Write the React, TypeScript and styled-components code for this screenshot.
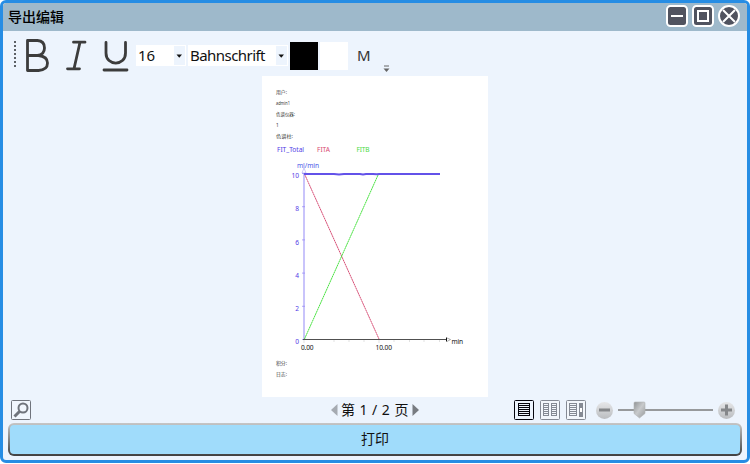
import React from "react";
import styled, { createGlobalStyle } from "styled-components";

const uiFont = `"Noto Sans", "Noto Sans CJK SC", sans-serif`;

const GlobalStyle = createGlobalStyle`
  * { box-sizing: border-box; }
  body { margin: 0; background: #fff; font-family: ${uiFont}; color: #111; overflow: hidden; }
  svg { display: block; flex: none; }
`;

const Window = styled.div`
  width: 750px;
  height: 463px;
  display: flex;
  flex-direction: column;
  border: 3px solid #268de4;
  border-radius: 6px;
  background: #edf4fd;
  overflow: hidden;
`;

const TitleBar = styled.header`
  height: 28px;
  flex: none;
  display: flex;
  align-items: center;
  justify-content: space-between;
  padding: 0 7px 0 5px;
  background: #9eb9cb;
`;

const Title = styled.span`
  font-size: 14px;
  line-height: 28px;
  font-weight: 500;
  color: #000;
`;

const WindowButtons = styled.div`
  display: flex;
  gap: 4px;
  margin-top: -2px;
`;

const Toolbar = styled.div`
  height: 45px;
  flex: none;
  display: flex;
  align-items: flex-start;
  padding: 5px 0 0 10px;
`;

const FormatIcons = styled.div`
  display: flex;
  margin-right: 3px;
`;

const Combo = styled.div<{ $width: number }>`
  width: ${(p) => p.$width}px;
  height: 21px;
  margin: 9px 2px 0 0;
  display: flex;
  justify-content: space-between;
  align-items: center;
  background: #fff;
  padding: 1px 1px 1px 2px;
  font-size: 15px;
  line-height: 19px;
  white-space: nowrap;
`;

const ComboText = styled.span<{ $width: number; $tracking?: number }>`
  width: ${(p) => p.$width}px;
  letter-spacing: ${(p) => p.$tracking ?? 0}px;
`;

const ComboArrow = styled.span`
  width: 11px;
  height: 19px;
  display: flex;
  align-items: center;
  justify-content: center;
  background: #edf4fd;
`;

const Swatch = styled.div<{ $color: string; $gap?: number }>`
  width: 28px;
  height: 28px;
  margin-top: 6px;
  margin-right: ${(p) => p.$gap ?? 0}px;
  background: ${(p) => p.$color};
`;

const MarkLabel = styled.span`
  width: 26px;
  margin-top: 9px;
  font-size: 15px;
  line-height: 21px;
  color: #333;
`;

const Overflow = styled.div`
  margin-top: 29px;
`;

const Viewer = styled.main`
  height: 321px;
  flex: none;
  display: flex;
  justify-content: center;
`;

const Paper = styled.section`
  width: 226px;
  height: 321px;
  background: #fff;
`;

const StatusBar = styled.div`
  height: 26px;
  flex: none;
  display: grid;
  grid-template-columns: 328px 1fr auto;
  align-items: center;
  padding: 0 11px 0 0;
`;

const SearchSlot = styled.div`
  padding-left: 8px;
`;

const Pager = styled.div`
  display: flex;
  align-items: center;
`;

const PageText = styled.span`
  width: 68px;
  margin: 0 3px;
  font-size: 14px;
  line-height: 26px;
  letter-spacing: 0.45px;
  white-space: nowrap;
`;

const ViewControls = styled.div`
  display: flex;
  align-items: center;
`;

const LayoutButtons = styled.div`
  display: flex;
  gap: 6px;
  margin-right: 10px;
`;

const PrintButton = styled.button`
  height: 33px;
  margin: 0 5px;
  padding: 0 0 2px;
  border: 2px solid transparent;
  border-radius: 6px;
  background:
    linear-gradient(#a0dcfb, #a0dcfb) padding-box,
    linear-gradient(#c6c6c6, #404040) border-box;
  font: 14px/27px ${uiFont};
  color: #111;
`;

type Kind = "min" | "max" | "close";

function WindowButton({ kind }: { kind: Kind }) {
  return (
    <svg width="22" height="22" viewBox="0 0 22 22" fill="none" stroke="#fff" strokeWidth="2">
      {kind === "close" ? (
        <circle cx="11" cy="11" r="10" fill="#50535f" />
      ) : (
        <rect x="1" y="1" width="20" height="20" rx="3.5" fill="#50535f" />
      )}
      {kind === "min" && <path d="M5 11H17" />}
      {kind === "max" && <rect x="6" y="6" width="10" height="10" />}
      {kind === "close" && <path d="M5 5L17 17M17 5L5 17" />}
    </svg>
  );
}

function FormatGlyphs() {
  return (
    <svg width="120" height="38" viewBox="13 36 120 38" fill="none" stroke="#3c3c3c" strokeWidth="2.8">
      <path d="M15 41V68" stroke="#5c6065" strokeWidth="2" strokeDasharray="2 2" />
      <path d="M27.5 40.5H37.5Q44.5 41 44.5 48Q44.5 54.5 37.5 55.5H27.5ZM27.5 55.5H38.5Q47.5 56.5 47.5 63Q47.5 70 38.5 70.5H27.5Z" strokeLinejoin="round" />
      <path d="M73.5 42.2H85M67.5 68.8H79.5M80 42.2L74 68.8" strokeLinecap="round" />
      <path d="M106 42.5V53C106 66.5 125.5 66.5 125.5 53V42.5M104 70H127" strokeLinecap="round" />
    </svg>
  );
}

function Triangle({ dir, color }: { dir: "left" | "right" | "down"; color: string }) {
  if (dir === "down") {
    return <svg width="7" height="4"><path d="M.5 .5H6L3.25 3.7Z" fill={color} /></svg>;
  }
  return (
    <svg width="7" height="12">
      <path d={dir === "left" ? "M6.5 0V12L0 6Z" : "M.5 0V12L7 6Z"} fill={color} />
    </svg>
  );
}

function SearchIcon() {
  return (
    <svg width="20" height="20" viewBox="0 0 20 20" fill="none" stroke="#70747c">
      <rect x=".5" y=".5" width="19" height="19" rx="1" fill="#f1f6fd" />
      <circle cx="12" cy="8" r="4.5" strokeWidth="2" />
      <path d="M8.5 11.5L3.5 16.5" strokeWidth="3" />
    </svg>
  );
}

function LayoutIcon({ kind }: { kind: "single" | "double" | "side" }) {
  const active = kind === "single";
  const color = active ? "#05050d" : "#858a94";
  const rows = [4, 6, 8, 10, 12, 14, 16];
  return (
    <svg width="20" height="20" viewBox="0 0 20 20" fill="none" stroke={color}>
      <rect x=".5" y=".5" width="19" height="19" rx="1" fill={active ? "#edf4fd" : "#f3f7fc"} />
      {rows.map((y) => (
        <React.Fragment key={y}>
          {kind === "single" && <path d={`M4 ${y - 0.5}H16`} strokeWidth="1.2" />}
          {kind === "double" && <path d={`M3 ${y - 0.5}H9M11 ${y - 0.5}H17`} strokeWidth="1.2" />}
          {kind === "side" && <path d={`M3 ${y - 0.5}H11`} strokeWidth="1.2" />}
        </React.Fragment>
      ))}
      {kind === "single" && <path d="M4.5 3V16M15.5 3V16" />}
      {kind === "double" && <path d="M3.5 3V16M8.5 3V16M11.5 3V16M16.5 3V16" />}
      {kind === "side" && (
        <>
          <path d="M3.5 3V16M10.5 3V16" />
          <rect x="13" y="3" width="4" height="14" fill={color} stroke="none" />
          <rect x="14" y="8" width="2" height="4" fill="#fff" stroke="none" />
        </>
      )}
    </svg>
  );
}

function ZoomSlider() {
  return (
    <svg width="140" height="20" viewBox="596 400 140 20">
      <defs>
        <linearGradient id="knob" x2="0" y2="1">
          <stop offset="0" stopColor="#e6e7e9" />
          <stop offset="1" stopColor="#babcbf" />
        </linearGradient>
        <linearGradient id="thumb" x2="1" y2="1">
          <stop offset="0" stopColor="#909395" />
          <stop offset=".48" stopColor="#c8cacc" />
          <stop offset="1" stopColor="#96999b" />
        </linearGradient>
      </defs>
      <circle cx="604.5" cy="410.5" r="8.5" fill="url(#knob)" />
      <path d="M599 410H610" stroke="#85878a" strokeWidth="3" />
      <path d="M618 410H713" stroke="#97999b" strokeWidth="2" />
      <path d="M634 403Q634 402 635 402H644Q645 402 645 403V413.5L639.5 418L634 413.5Z" fill="url(#thumb)" stroke="#b4b6b7" strokeWidth=".6" />
      <circle cx="726.5" cy="410.5" r="8.5" fill="url(#knob)" />
      <path d="M721 410H732M726.5 404.5V415.5" stroke="#85878a" strokeWidth="3" />
    </svg>
  );
}

const notes = [
  { text: "用户:", y: 94, w: 11 },
  { text: "admin1", y: 105, w: 14 },
  { text: "色谱仪器:", y: 116, w: 19 },
  { text: "1", y: 127, w: 0 },
  { text: "色谱柱:", y: 138, w: 17 },
  { text: "积分:", y: 365, w: 11 },
  { text: "日志:", y: 376, w: 11 },
];

const ChartText = styled.text`
  font-family: ${uiFont};
  font-size: 6.6px;
`;

const NoteText = styled.text`
  font-family: ${uiFont};
  font-size: 4.8px;
  fill: #333;
`;

const yTicks = [10, 8, 6, 4, 2, 0];

function Report() {
  return (
    <svg width="226" height="321" viewBox="262 76 226 321">
      {notes.map((n) => (
        <NoteText key={n.text} x="276" y={n.y} textLength={n.w || undefined} lengthAdjust="spacingAndGlyphs">{n.text}</NoteText>
      ))}
      <ChartText x="277" y="152" textLength="27" fill="#513be6">FIT_Total</ChartText>
      <ChartText x="317" y="152" textLength="13" fill="#d84b70">FITA</ChartText>
      <ChartText x="356.5" y="152" textLength="13" fill="#4bdb43">FITB</ChartText>
      <ChartText x="297" y="168" textLength="22" fill="#4a55e8">ml/min</ChartText>
      <path d="M304 172V339" stroke="#c9c4fb" strokeWidth="2" />
      <path d="M302 173L304 168L306 173Z" fill="#fff" stroke="#aaa1f5" strokeWidth=".6" />
      {yTicks.map((v) => {
        const y = 339.5 - v * 16.6;
        return (
          <React.Fragment key={v}>
            <path d={`M302 ${y}H305`} stroke="#9285f5" strokeWidth=".7" />
            <ChartText x="299" y={y + 4.7} textAnchor="end" fill="#513be6">{v}</ChartText>
          </React.Fragment>
        );
      })}
      <path d="M304.5 174L379 339" stroke="#d33c68" strokeWidth=".9" strokeDasharray="2 .4" fill="none" />
      <path d="M304.5 339L378.5 174" stroke="#35df2c" strokeWidth=".9" strokeDasharray="2 .4" fill="none" />
      <path d="M303 339.5H447" stroke="#505050" strokeWidth="1" />
      <path d="M304 340V343M379 340V343M334 340V342M349 340V342M364 340V342M394 340V342M409.5 340V342M424 340V342M439.5 340V342" stroke="#ccc" strokeWidth=".6" />
      <path d="M446.5 337.5V341.5" stroke="#111" />
      <path d="M447 338L450.5 339.5L447 341.5" fill="#fff" stroke="#777" strokeWidth=".6" />
      <path d="M304 174H334L339 174.5L344 174H360L363 174.5L366 174H373L377 174.3L379 174H440" fill="none" stroke="#6352e9" strokeWidth="2" />
      <ChartText x="301" y="349.5" textLength="12.5" fill="#111">0.00</ChartText>
      <ChartText x="375.5" y="349.5" textLength="16.5" fill="#111">10.00</ChartText>
      <ChartText x="451.5" y="344" textLength="11.5" fill="#111">min</ChartText>
    </svg>
  );
}

export default function App() {
  return (
    <>
      <GlobalStyle />
      <Window>
        <TitleBar>
          <Title>导出编辑</Title>
          <WindowButtons>
            <WindowButton kind="min" />
            <WindowButton kind="max" />
            <WindowButton kind="close" />
          </WindowButtons>
        </TitleBar>
        <Toolbar>
          <FormatIcons><FormatGlyphs /></FormatIcons>
          <Combo $width={50}>
            <ComboText $width={20}>16</ComboText>
            <ComboArrow><Triangle dir="down" color="#111" /></ComboArrow>
          </Combo>
          <Combo $width={100}>
            <ComboText $width={80} $tracking={-0.55}>Bahnschrift</ComboText>
            <ComboArrow><Triangle dir="down" color="#111" /></ComboArrow>
          </Combo>
          <Swatch $color="#000" $gap={2} />
          <Swatch $color="#fff" $gap={9} />
          <MarkLabel>M</MarkLabel>
          <Overflow>
            <svg width="7" height="8"><path d="M1 1H6" stroke="#666" /><path d="M.5 3.5H6.5L3.5 7Z" fill="#666" /></svg>
          </Overflow>
        </Toolbar>
        <Viewer>
          <Paper><Report /></Paper>
        </Viewer>
        <StatusBar>
          <SearchSlot><SearchIcon /></SearchSlot>
          <Pager>
            <Triangle dir="left" color="#a5aab1" />
            <PageText>第 1 / 2 页</PageText>
            <Triangle dir="right" color="#777b81" />
          </Pager>
          <ViewControls>
            <LayoutButtons>
              <LayoutIcon kind="single" />
              <LayoutIcon kind="double" />
              <LayoutIcon kind="side" />
            </LayoutButtons>
            <ZoomSlider />
          </ViewControls>
        </StatusBar>
        <PrintButton>打印</PrintButton>
      </Window>
    </>
  );
}
